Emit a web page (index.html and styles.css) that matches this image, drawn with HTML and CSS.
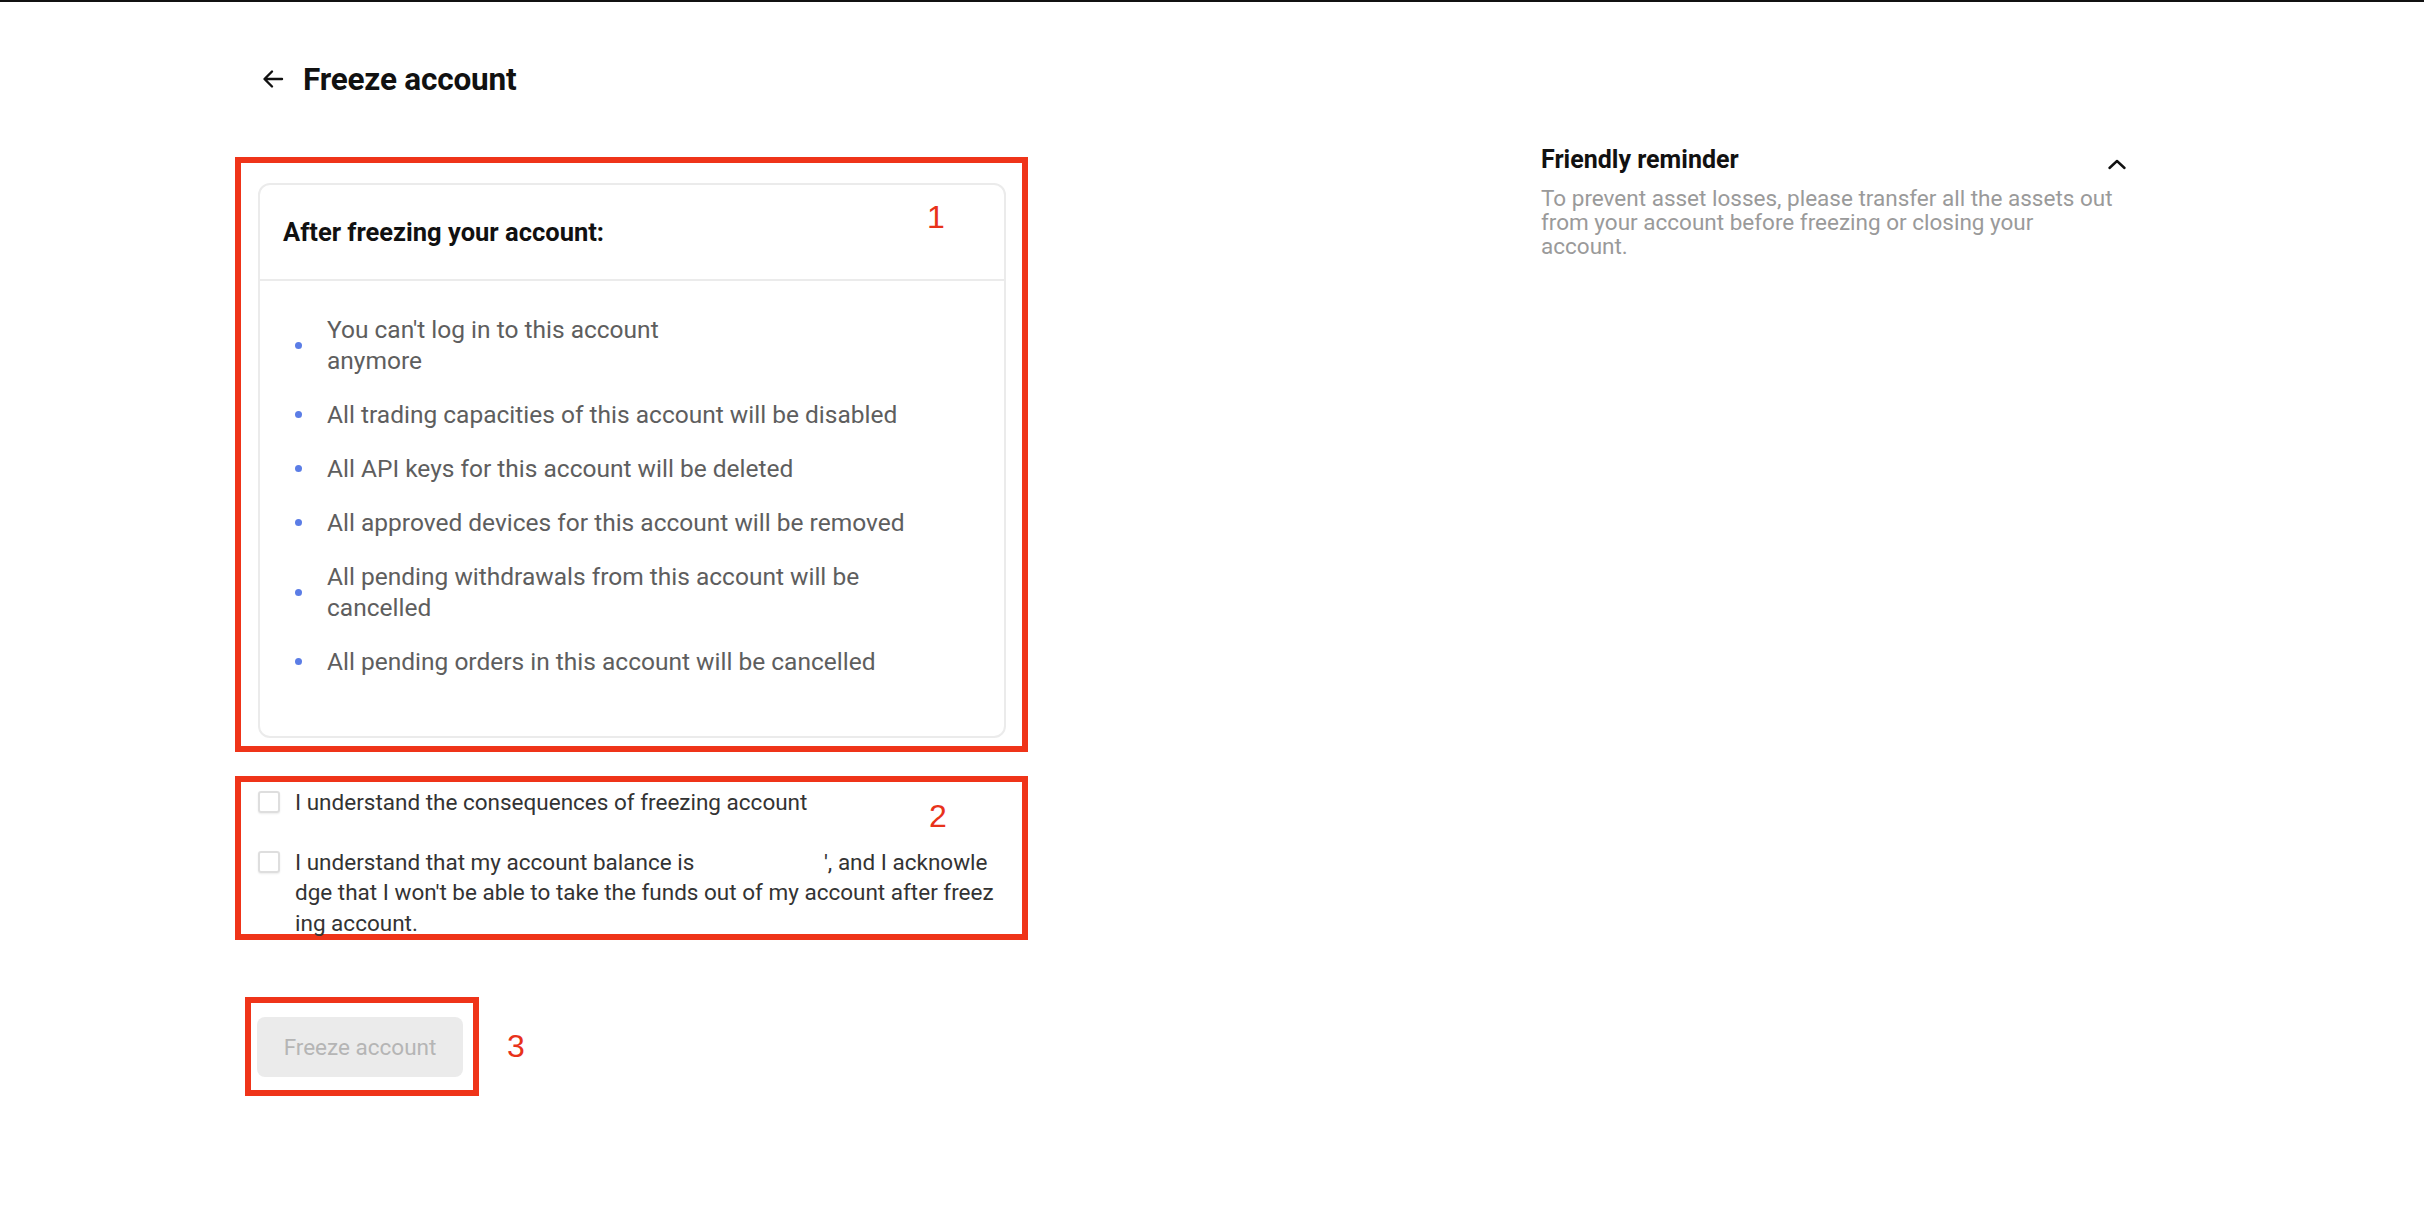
FILE: index.html
```html
<!DOCTYPE html>
<html lang="en">
<head>
    <meta charset="UTF-8">
    <meta name="viewport" content="width=device-width, initial-scale=1.0">
    <title>Freeze account</title>
    <link rel="stylesheet" href="styles.css">
</head>
<body>
    <div class="page">
        <div class="main">
            <div class="topbar">
                <svg class="back" width="22" height="20" viewBox="0 0 22 20">
                    <path d="M20 10H3M10 2.5L2.5 10l7.5 7.5" fill="none" stroke="#111" stroke-width="2.4" stroke-linecap="round" stroke-linejoin="round"/>
                </svg>
                <h1>Freeze account</h1>
            </div>

            <div class="mark mark-card">
                <span class="mark-num num1">1</span>
                <div class="card">
                    <div class="card-head">After freezing your account:</div>
                    <ul class="effects">
                        <li><span class="dot"></span><span>You can't log in to this account <span class="mail-hidden"></span> anymore</span></li>
                        <li><span class="dot"></span><span>All trading capacities of this account will be disabled</span></li>
                        <li><span class="dot"></span><span>All API keys for this account will be deleted</span></li>
                        <li><span class="dot"></span><span>All approved devices for this account will be removed</span></li>
                        <li><span class="dot"></span><span>All pending withdrawals from this account will be cancelled</span></li>
                        <li><span class="dot"></span><span>All pending orders in this account will be cancelled</span></li>
                    </ul>
                </div>
            </div>

            <div class="mark mark-checks">
                <span class="mark-num num2">2</span>
                <label class="check-row">
                    <span class="box"></span>
                    <span class="check-text">I understand the consequences of freezing account</span>
                </label>
                <label class="check-row">
                    <span class="box"></span>
                    <span class="check-text lines">I understand that my account balance is <span class="balance-hidden"></span>′, and I acknowle<br>dge that I won't be able to take the funds out of my account after freez<br>ing account.</span>
                </label>
            </div>

            <div class="submit-row">
                <div class="mark mark-btn">
                    <button class="btn" disabled>Freeze account</button>
                </div>
                <span class="num3">3</span>
            </div>
        </div>

        <aside class="reminder">
            <div class="reminder-head">
                <h2>Friendly reminder</h2>
                <svg class="chev" width="20" height="11" viewBox="0 0 20 11">
                    <path d="M2.5 9L10 2l7.5 7" fill="none" stroke="#111" stroke-width="2.4" stroke-linecap="round" stroke-linejoin="round"/>
                </svg>
            </div>
            <p>To prevent asset losses, please transfer all the assets out from your account before freezing or closing your account.</p>
        </aside>
    </div>
</body>
</html>
```

FILE: styles.css
```css
*{
    box-sizing: border-box;
}
body{
    margin: 0;
    border-top: 2px solid #111;
    background: #fff;
    font-family: Roboto, "Liberation Sans", sans-serif;
    color: #111;
}
.page{
    display: flex;
    align-items: flex-start;
    padding-left: 235px;
}
.main{
    width: 793px;
    flex: none;
}
.topbar{
    display: flex;
    align-items: center;
    gap: 19px;
    height: 40px;
    margin-top: 57px;
    padding-left: 27px;
}
.topbar h1{
    margin: 0;
    font-size: 31.5px;
    font-weight: 700;
    letter-spacing: -0.2px;
}

/* red annotation frames */
.mark{
    position: relative;
    border: 6px solid #ef3419;
}
.mark-num{
    position: absolute;
    font-family: "Liberation Sans", sans-serif;
    font-size: 32px;
    line-height: 32px;
    color: #e8321a;
}
.num1{
    left: 686px;
    top: 38px;
}
.num2{
    left: 688px;
    top: 18px;
}
.mark-card{
    margin-top: 58px;
    padding: 20px 16px 8px 17px;
}
.card{
    border: 2px solid #ebebeb;
    border-radius: 12px;
}
.card-head{
    display: flex;
    align-items: center;
    height: 96px;
    padding-left: 23px;
    border-bottom: 2px solid #ebebeb;
    font-size: 25.5px;
    font-weight: 700;
}
.effects{
    list-style: none;
    margin: 0;
    padding: 33px 68px 59px 35px;
}
.effects li{
    display: flex;
    align-items: center;
    gap: 25px;
    font-size: 24.5px;
    line-height: 31px;
    color: #5e5e5e;
}
.effects li + li{
    margin-top: 23px;
}
.dot{
    flex: none;
    width: 7px;
    height: 7px;
    border-radius: 50%;
    background: #5b7de6;
}
.mail-hidden{
    display: inline-block;
    width: 210px;
    height: 10px;
}

.mark-checks{
    margin-top: 24px;
    height: 164px;
    padding: 5px 0 0 17px;
}
.check-row{
    display: flex;
    align-items: flex-start;
    gap: 15px;
    font-size: 22.5px;
    line-height: 30.5px;
    color: #333;
}
.check-row + .check-row{
    margin-top: 29px;
}
.box{
    flex: none;
    width: 22px;
    height: 22px;
    margin-top: 4px;
    border: 2px solid #dedede;
    border-radius: 3px;
    box-shadow: 0 1px 2px rgba(0,0,0,0.08);
}
.lines{
    white-space: nowrap;
}
.balance-hidden{
    display: inline-block;
    width: 124px;
    height: 10px;
}

.submit-row{
    display: flex;
    align-items: center;
    margin-top: 57px;
    padding-left: 10px;
}
.mark-btn{
    width: 234px;
    height: 99px;
    padding: 14px 10px 13px 6px;
}
.btn{
    width: 206px;
    height: 60px;
    border: none;
    border-radius: 8px;
    background: #ebebeb;
    color: #b5b5b5;
    font-family: Roboto, "Liberation Sans", sans-serif;
    font-size: 22.5px;
}
.num3{
    margin-left: 28px;
    font-family: "Liberation Sans", sans-serif;
    font-size: 32px;
    color: #e8321a;
}

.reminder{
    width: 586px;
    margin-left: 513px;
    padding-top: 142px;
}
.reminder-head{
    display: flex;
    justify-content: space-between;
    align-items: center;
    height: 30px;
}
.reminder-head h2{
    margin: 0;
    font-size: 25px;
    font-weight: 700;
}
.chev{
    margin-top: 10px;
}
.reminder p{
    width: 572px;
    margin: 12px 0 0;
    font-size: 22.5px;
    line-height: 24px;
    color: #9a9a9a;
}
```
